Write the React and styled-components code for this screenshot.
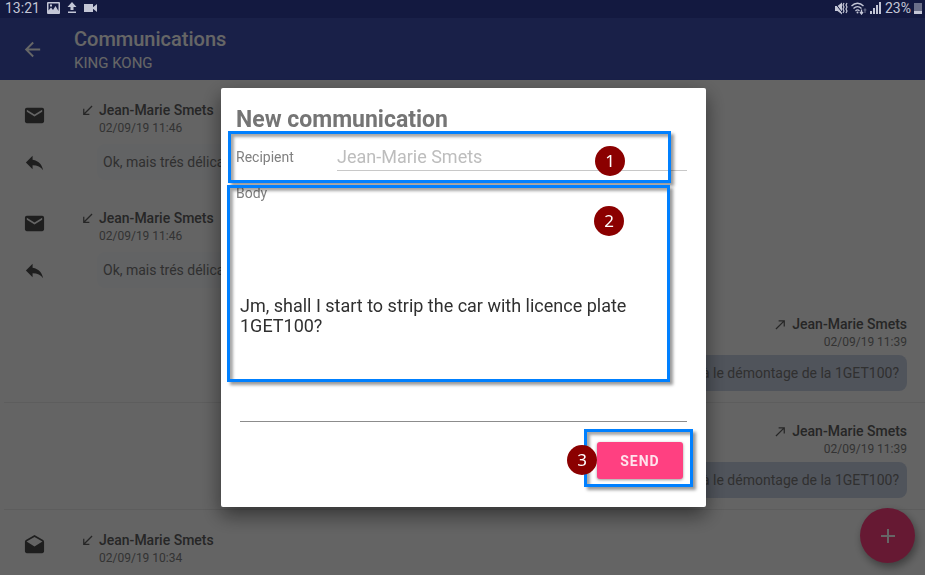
import React, { useState } from "react";
import styled, { createGlobalStyle } from "styled-components";
import {
  MdAdd,
  MdArrowBack,
  MdCallMade,
  MdCallReceived,
  MdDrafts,
  MdEmail,
  MdReply,
} from "react-icons/md";

const messages = [
  { id: 1, name: "Jean-Marie Smets", date: "02/09/19 11:46", text: "Ok, mais trés délicat" },
  { id: 2, name: "Jean-Marie Smets", date: "02/09/19 11:46", text: "Ok, mais trés délicat" },
  { id: 3, name: "Jean-Marie Smets", date: "02/09/19 11:39", text: "à le démontage de la 1GET100?", sent: true },
  { id: 4, name: "Jean-Marie Smets", date: "02/09/19 11:39", text: "à le démontage de la 1GET100?", sent: true },
  { id: 5, name: "Jean-Marie Smets", date: "02/09/19 10:34", read: true },
];

function StatusIcons() {
  return (
    <>
      <svg width="13" height="12" viewBox="0 0 13 12" fill="currentColor" aria-hidden="true">
        <path fillRule="evenodd" d="M1 0h11a1 1 0 0 1 1 1v10a1 1 0 0 1-1 1H1a1 1 0 0 1-1-1V1a1 1 0 0 1 1-1zm.5 1.5v7l2.5-3 2 2.5 2.5-4 3 5v-7.5zM3 2.5h2v2H3z" />
      </svg>
      <svg width="10" height="12" viewBox="0 0 10 12" fill="currentColor" aria-hidden="true">
        <path d="M5 0l4.500 5H6.500v3h-3V5H.5zM1 9.500h8V11H1z" />
      </svg>
      <svg width="13" height="8" viewBox="0 0 13 8" fill="currentColor" aria-hidden="true">
        <path d="M0 0h9v8H0zM8 4l5-4v8z" />
      </svg>
    </>
  );
}

function PhoneIcons() {
  return (
    <>
      <svg width="13" height="13" viewBox="0 0 13 13" fill="currentColor" aria-hidden="true">
        <path d="M0 4h2.500L7 .5v12L2.500 9H0z" />
        <path d="M0 1l8 10.500" stroke="#131940" strokeWidth="1" />
        <path d="M9 1l-1 2 1 2-1 2 1 2-1 2M12 1l-1 2 1 2-1 2 1 2-1 2" fill="none" stroke="currentColor" strokeWidth="1.200" />
      </svg>
      <svg width="16" height="13" viewBox="0 0 16 13" fill="none" stroke="currentColor" strokeWidth="1.300" aria-hidden="true">
        <path d="M.5 4C4 .3 9 .3 12.500 4M2.500 6.500c2.500-2.600 5.500-2.600 8 0M4.500 9c1.300-1.400 2.700-1.400 4 0" />
        <circle cx="6.500" cy="10.500" r="1" fill="currentColor" stroke="none" />
        <path d="M10.500 7.500v4M9 10l1.500 2 1.500-2" />
        <path d="M14 11V7M12.800 8.500L14 7l1.200 1.500" opacity=".4" />
      </svg>
      <svg width="12" height="12" viewBox="0 0 12 12" fill="currentColor" aria-hidden="true">
        <path d="M0 9h2v3H0zM3 6h2v6H3zM6 3h2v9H6zM9 0h2v12H9z" />
      </svg>
    </>
  );
}

function Message({ message }) {
  const { name, date, text, sent, read } = message;
  return (
    <Row $sent={sent}>
      {!sent && (
        <Actions>
          <IconButton aria-label="Open message">{read ? <MdDrafts /> : <MdEmail />}</IconButton>
          {text && (
            <IconButton aria-label="Reply">
              <MdReply />
            </IconButton>
          )}
        </Actions>
      )}
      <Content $sent={sent}>
        <Name>
          {sent ? <MdCallMade /> : <MdCallReceived />}
          {name}
        </Name>
        <SentAt>{date}</SentAt>
        {text && <Bubble $sent={sent}>{text}</Bubble>}
      </Content>
    </Row>
  );
}

function App() {
  const [recipient, setRecipient] = useState("Jean-Marie Smets");
  const [body, setBody] = useState(
    "Jm, shall I start to strip the car with licence plate 1GET100?"
  );

  return (
    <Page>
      <GlobalStyle />
      <StatusBar>
        <StatusGroup $gap="7px">
          <span>13:21</span>
          <StatusIcons />
        </StatusGroup>
        <StatusGroup $gap="3px">
          <PhoneIcons />
          <span>23%</span>
          <Battery />
        </StatusGroup>
      </StatusBar>
      <Header>
        <BackButton aria-label="Back">
          <MdArrowBack />
        </BackButton>
        <Heading>
          <Title>Communications</Title>
          <Subtitle>KING KONG</Subtitle>
        </Heading>
      </Header>
      <List>
        {messages.map((message) => (
          <Message key={message.id} message={message} />
        ))}
      </List>
      <AddButton aria-label="New communication">
        <MdAdd />
      </AddButton>

      <Scrim>
        <Dialog role="dialog" aria-labelledby="dialog-title">
          <DialogTitle id="dialog-title">New communication</DialogTitle>
          <RecipientField>
            <Label htmlFor="recipient">Recipient</Label>
            <Input
              id="recipient"
              value={recipient}
              onChange={(e) => setRecipient(e.target.value)}
            />
            <Highlight $inset="0 16px 0 -8px" />
            <Badge $top="15px" $right="62px">1</Badge>
          </RecipientField>
          <BodyField>
            <Label htmlFor="body">Body</Label>
            <TextArea id="body" value={body} onChange={(e) => setBody(e.target.value)} />
            <Highlight $inset="2px 17px 40px -9px" />
            <Badge $top="23px" $right="63px">2</Badge>
          </BodyField>
          <Footer>
            <SendField>
              <SendButton>SEND</SendButton>
              <Highlight $inset="-13px -10px -8px -13px" />
              <Badge $top="3px" $right="86px">3</Badge>
            </SendField>
          </Footer>
        </Dialog>
      </Scrim>
    </Page>
  );
}

const GlobalStyle = createGlobalStyle`
  * {
    box-sizing: border-box;
  }

  body {
    margin: 0;
    background: #fafafa;
    font-family: Roboto, "Liberation Sans", sans-serif;
  }

  button, input, textarea {
    font-family: inherit;
  }
`;

const Page = styled.div`
  height: 100vh;
  display: flex;
  flex-direction: column;
  overflow: hidden;
`;

const StatusBar = styled.div`
  position: relative;
  z-index: 2;
  flex: none;
  display: flex;
  justify-content: space-between;
  height: 18px;
  padding: 0 3px 2px 5px;
  background: #131940;
  color: #c3c6d6;
  font-size: 14px;
  line-height: 16px;
`;

const StatusGroup = styled.div`
  display: flex;
  align-items: center;
  gap: ${(props) => props.$gap};
`;

const Battery = styled.div`
  width: 8px;
  height: 11px;
  background: linear-gradient(#6a6e88 70%, #c3c6d6 70%);
`;

const Header = styled.header`
  flex: none;
  display: flex;
  align-items: center;
  gap: 30px;
  height: 62px;
  padding: 0 21px;
  background: #3f51b5;
  color: #fff;
`;

const BackButton = styled.button`
  display: flex;
  padding: 0;
  border: 0;
  background: none;
  color: inherit;
  font-size: 23px;
`;

const Heading = styled.div`
  padding-top: 4px;
`;

const Title = styled.h1`
  margin: 0;
  font-size: 20px;
  font-weight: 500;
  line-height: 24px;
`;

const Subtitle = styled.p`
  margin: 0;
  font-size: 15px;
  line-height: 24px;
`;

const List = styled.main`
  flex: 1;
  min-height: 0;
`;

const Row = styled.article`
  display: flex;
  justify-content: ${(props) => (props.$sent ? "flex-end" : "flex-start")};
  height: ${(props) => (props.$sent ? "107px" : "108px")};
  margin-left: 4px;
  padding: ${(props) => (props.$sent ? "18px 18px 0 0" : "20px 0 0 19px")};
  border-bottom: ${(props) => (props.$sent ? "1px solid #e8e8e8" : "0")};
`;

const Actions = styled.div`
  display: flex;
  flex-direction: column;
  gap: 24px;
  width: 59px;
  padding-top: 4px;
`;

const IconButton = styled.button`
  display: flex;
  padding: 0;
  border: 0;
  background: none;
  color: #4c4c4c;
  font-size: 23px;
`;

const Content = styled.div`
  display: flex;
  flex-direction: column;
  align-items: ${(props) => (props.$sent ? "flex-end" : "flex-start")};
  padding-left: 15px;
`;

const Name = styled.div`
  display: flex;
  align-items: center;
  gap: 4px;
  margin-left: -17px;
  color: #606060;
  font-size: 14px;
  font-weight: 500;
  line-height: 20px;

  svg {
    width: 15px;
    height: 15px;
  }
`;

const SentAt = styled.div`
  margin-left: 2px;
  color: #808080;
  font-size: 12px;
  line-height: 16px;
`;

const Bubble = styled.div`
  margin-top: ${(props) => (props.$sent ? "5px" : "8px")};
  padding: ${(props) => (props.$sent ? "0 8px" : "0 6px")};
  border-radius: 8px;
  background: ${(props) => (props.$sent ? "#c8d2e4" : "#f5f7fa")};
  color: #787878;
  font-size: 14px;
  line-height: 36px;
`;

const AddButton = styled.button`
  position: fixed;
  right: 10px;
  bottom: 12px;
  display: flex;
  align-items: center;
  justify-content: center;
  width: 55px;
  height: 55px;
  border: 0;
  border-radius: 50%;
  background: #ff4081;
  box-shadow: 2px 4px 8px rgba(0, 0, 0, 0.4);
  color: #fff;
  font-size: 24px;
`;

const Scrim = styled.div`
  position: fixed;
  inset: 0;
  z-index: 1;
  display: flex;
  align-items: center;
  justify-content: center;
  padding: 20px 0 0 2px;
  background: rgba(0, 0, 0, 0.6);
`;

const Dialog = styled.section`
  width: 100%;
  max-width: 485px;
  padding: 21px 19px 28px 15px;
  border-radius: 2px;
  background: #fff;
  box-shadow: 0 8px 20px rgba(0, 0, 0, 0.5);
`;

const DialogTitle = styled.h2`
  margin: 0;
  color: #757575;
  font-size: 23px;
  font-weight: 700;
  line-height: 22px;
`;

const RecipientField = styled.div`
  position: relative;
  display: flex;
  align-items: flex-start;
  height: 52px;
  padding-top: 12px;

  label {
    width: 101px;
    line-height: 28px;
  }
`;

const BodyField = styled.div`
  position: relative;
  padding-top: 1px;
`;

const Label = styled.label`
  display: block;
  color: #808080;
  font-size: 14px;
  line-height: 18px;
`;

const Input = styled.input`
  flex: 1;
  min-width: 0;
  height: 28px;
  padding: 0;
  border: 0;
  border-bottom: 1px solid #c8c8c8;
  outline: 0;
  background: none;
  color: #bdbdbd;
  font-size: 18px;
`;

const TextArea = styled.textarea`
  display: block;
  width: calc(100% - 4px);
  height: 220px;
  margin-left: 4px;
  padding: 94px 20px 0 0;
  border: 0;
  border-bottom: 1px solid #8c8c8c;
  outline: 0;
  resize: none;
  background: none;
  color: #303030;
  font-size: 18px;
  line-height: 20px;
`;

const Footer = styled.div`
  display: flex;
  justify-content: flex-end;
  padding: 20px 4px 0 0;
`;

const SendField = styled.div`
  position: relative;
`;

const SendButton = styled.button`
  display: block;
  width: 86px;
  height: 37px;
  border: 0;
  border-radius: 3px;
  background: #ff4081;
  box-shadow: 0 1px 3px rgba(0, 0, 0, 0.4);
  color: #ffe3ec;
  font-size: 14px;
  font-weight: 700;
  letter-spacing: 1px;
`;

const Highlight = styled.div`
  position: absolute;
  inset: ${(props) => props.$inset};
  border: 3px solid #0080ff;
  box-shadow: 3px 3px 3px rgba(0, 0, 0, 0.4), inset 3px 3px 3px rgba(0, 0, 0, 0.35);
  pointer-events: none;
`;

const Badge = styled.span`
  position: absolute;
  top: ${(props) => props.$top};
  right: ${(props) => props.$right};
  width: 30px;
  height: 30px;
  border-radius: 50%;
  background: #8b0000;
  color: #fff;
  font-family: "Noto Sans", sans-serif;
  font-size: 17px;
  line-height: 30px;
  text-align: center;
`;

export default App;
